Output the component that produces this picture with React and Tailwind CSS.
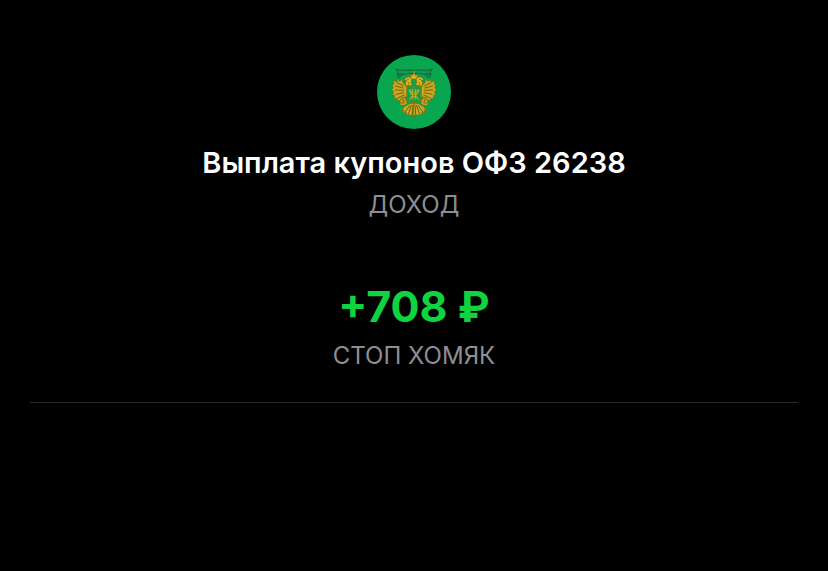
const operation = {
  title: 'Выплата купонов ОФЗ 26238',
  category: 'ДОХОД',
  amount: '+708 ₽',
  account: 'СТОП ХОМЯК',
}

// One half of the eagle, mirrored for the other side
function EagleHalf() {
  return (
    <g strokeLinejoin="round" strokeLinecap="round">
      {/* ribbon */}
      <path d="M132 67C116 62 98 72 77 63l7 9-3 7c20 5 34-6 51-3z" fill="#109a4b" stroke="#17633a" strokeWidth="3" />
      <path d="M83 79c-2 4-1 8 2 11l7-3 4-9z" fill="#14854a" stroke="#17633a" strokeWidth="2" />
      {/* wing */}
      <path
        d="M110 114L99 104l-3-10-7 6-7-6-1 9-10-6 0 12-5 1 4 10-5 5 6 7-4 7 7 4-2 9 10-1 0 8 8-3 7-6 13-4z"
        fill="#cba81b"
        stroke="#6f6a1e"
        strokeWidth="2"
      />
      <path
        d="M100 113l-18-8M100 120l-24-6M100 127l-25-1M101 134l-23 5M103 141l-18 8"
        fill="none"
        stroke="#71631a"
        strokeWidth="3"
      />
      {/* head and neck */}
      <path d="M127 111l-3-9 2-8-7-8-11 2-6 8 8 2-4 6 1 10z" fill="#dab51c" stroke="#6b5d18" strokeWidth="2" />
      <circle cx="114" cy="94" r="2" fill="#4f4b16" />
      <path d="M117 103l-2 6" stroke="#6b5d18" strokeWidth="2" />
      {/* leg */}
      <path d="M103 148l-8 2-6 9 2 5-3 5 7 4 9-1 8-6-3-11z" fill="#c8a31c" stroke="#5f6a1e" strokeWidth="2" />
      <path d="M96 154l8 10M102 152l-3 15M91 164l7 2" stroke="#6f641a" strokeWidth="2" />
      {/* tail */}
      <path
        d="M132 166l-14 1-13 8-11 13 8-1-2 8 9-2 0 8 8-3 3 6 6-6 6 7z"
        fill="#d0ac1c"
        stroke="#7a6a1c"
        strokeWidth="2"
      />
      <path d="M129 171l-2 26M124 172l-8 24M119 173l-13 18" stroke="#675b1a" strokeWidth="3" />
      {/* shield with its charge */}
      <path d="M132 114h-21v37q0 10 10 10l11 4z" fill="#0f9f4b" stroke="#8a781b" strokeWidth="3" />
      <path
        d="M132 133h-8l-5-9v8l4 7h9M127 153v-29M132 146h-8l-5 8"
        fill="none"
        stroke="#c5b32a"
        strokeWidth="3"
      />
    </g>
  )
}

function Emblem() {
  return (
    <svg viewBox="21 21 222 222" className="size-[74px]" aria-hidden="true">
      <circle cx="132" cy="132" r="111" fill="#07a64f" />
      <EagleHalf />
      <g transform="translate(264 0) scale(-1 1)">
        <EagleHalf />
      </g>
      <path
        d="M120 78l7 5 5-9 5 9 7-5-4 15h-16z"
        fill="#e0b91b"
        stroke="#80651a"
        strokeWidth="2"
        strokeLinejoin="round"
      />
      <path d="M132 69v7M129 72h6" stroke="#d4b329" strokeWidth="2" />
    </svg>
  )
}

export default function App() {
  return (
    <main className="min-h-screen bg-black px-[30px] pt-[55px] font-['Inter','Liberation_Sans',sans-serif]">
      <section className="flex flex-col items-center border-b border-[#2b2b2b] pb-[30px] text-center">
        <Emblem />
        <h1 className="mt-4 text-[29px] leading-9 font-semibold text-white">{operation.title}</h1>
        <p className="mt-2 text-2xl leading-8 text-[#8e8e93]">{operation.category}</p>
        <p className="mt-14 text-[43px] leading-[58px] font-bold text-[#0fd33f]">{operation.amount}</p>
        <p className="mt-[5px] text-2xl leading-8 text-[#8e8e93]">{operation.account}</p>
      </section>
    </main>
  )
}
